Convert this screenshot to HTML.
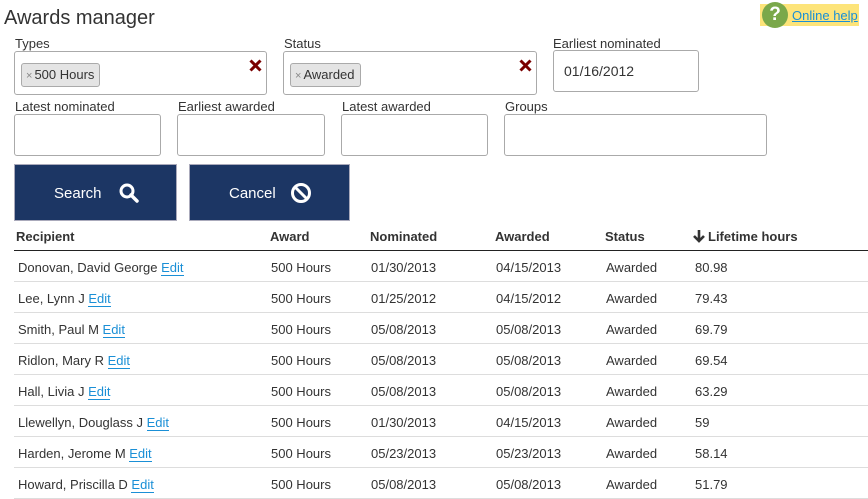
<!DOCTYPE html>
<html><head><style>
*{box-sizing:border-box;margin:0;padding:0}
body{width:868px;height:495px;overflow:hidden;background:#fff;font-family:"Liberation Sans",sans-serif;color:#333;position:relative}
.a{position:absolute;white-space:nowrap}
.lbl{font-size:13px;color:#333}
.box{position:absolute;border:1px solid #aaa;border-radius:3px;background:#fff}
.tag{position:absolute;top:11px;left:6px;height:24px;border:1px solid #aaa;border-radius:3px;background:#e4e4e4;font-size:13px;line-height:22px;padding:0 5px 0 4px;color:#333}
.tag span{color:#888;font-size:11px;margin-right:2px}
.btn{position:absolute;top:164px;height:57px;background:#1c3664;border:1px solid #aab;color:#fff;font-size:15px}
.th{position:absolute;top:229px;font-size:13px;font-weight:bold;color:#333}
.row{position:absolute;left:14px;width:854px;height:31px;border-bottom:1px solid #ddd;font-size:13px}
.row div{position:absolute;top:9px;white-space:nowrap}
.e{color:#1a8fd6;border-bottom:1px solid #1a8fd6}
</style></head><body>
<div class="a" style="left:4px;top:7px;font-size:20px;color:#333">Awards manager</div>
<div class="a" style="left:760px;top:4px;width:99px;height:22px;background:#fde47a"></div>
<div class="a" style="left:762px;top:2px;width:26px;height:26px;border-radius:50%;background:#7aa84a;color:#fff;font-weight:bold;font-size:19px;text-align:center;line-height:26px">?</div>
<div class="a" style="left:792px;top:8px;font-size:13px;color:#1a8fd6;text-decoration:underline">Online help</div>

<div class="a lbl" style="left:15px;top:36px">Types</div>
<div class="box" style="left:14px;top:51px;width:253px;height:44px"><div class="tag"><span>×</span>500 Hours</div>
<svg class="a" style="right:4px;top:7px" width="13" height="13" viewBox="0 0 13 13"><path d="M1.5 1.5L11.5 11.5M11.5 1.5L1.5 11.5" stroke="#7a0000" stroke-width="3"/></svg></div>
<div class="a lbl" style="left:284px;top:36px">Status</div>
<div class="box" style="left:283px;top:51px;width:254px;height:44px"><div class="tag"><span>×</span>Awarded</div>
<svg class="a" style="right:4px;top:7px" width="13" height="13" viewBox="0 0 13 13"><path d="M1.5 1.5L11.5 11.5M11.5 1.5L1.5 11.5" stroke="#7a0000" stroke-width="3"/></svg></div>
<div class="a lbl" style="left:553px;top:36px">Earliest nominated</div>
<div class="box" style="left:553px;top:50px;width:146px;height:42px;font-size:14px;padding:12px 0 0 10px">01/16/2012</div>

<div class="a lbl" style="left:15px;top:99px">Latest nominated</div>
<div class="box" style="left:14px;top:114px;width:147px;height:42px"></div>
<div class="a lbl" style="left:178px;top:99px">Earliest awarded</div>
<div class="box" style="left:177px;top:114px;width:148px;height:42px"></div>
<div class="a lbl" style="left:342px;top:99px">Latest awarded</div>
<div class="box" style="left:341px;top:114px;width:147px;height:42px"></div>
<div class="a lbl" style="left:505px;top:99px">Groups</div>
<div class="box" style="left:504px;top:114px;width:263px;height:42px"></div>

<div class="btn" style="left:14px;width:163px"><span class="a" style="left:39px;top:20px">Search</span>
<svg class="a" style="left:103px;top:17px" width="22" height="22" viewBox="0 0 22 22"><circle cx="9" cy="9" r="6" fill="none" stroke="#fff" stroke-width="3"/><line x1="13" y1="13" x2="19" y2="19" stroke="#fff" stroke-width="3.5" stroke-linecap="round"/></svg></div>
<div class="btn" style="left:189px;width:161px"><span class="a" style="left:39px;top:20px">Cancel</span>
<svg class="a" style="left:100px;top:17px" width="22" height="22" viewBox="0 0 22 22"><circle cx="11" cy="11" r="8.5" fill="none" stroke="#fff" stroke-width="3"/><line x1="5" y1="5" x2="17" y2="17" stroke="#fff" stroke-width="3"/></svg></div>

<div class="th" style="left:16px">Recipient</div>
<div class="th" style="left:270px">Award</div>
<div class="th" style="left:370px">Nominated</div>
<div class="th" style="left:495px">Awarded</div>
<div class="th" style="left:605px">Status</div>
<svg class="a" style="left:692px;top:229px" width="14" height="14" viewBox="0 0 14 14"><path d="M7 1V12M2 7L7 12L12 7" fill="none" stroke="#333" stroke-width="2.6"/></svg>
<div class="th" style="left:708px">Lifetime hours</div>
<div class="a" style="left:14px;top:250px;width:854px;height:1px;background:#222"></div>

<div class="row" style="top:251px"><div style="left:4px">Donovan, David George <span class="e">Edit</span></div><div style="left:257px">500 Hours</div><div style="left:357px">01/30/2013</div><div style="left:482px">04/15/2013</div><div style="left:592px">Awarded</div><div style="left:681px">80.98</div></div>
<div class="row" style="top:282px"><div style="left:4px">Lee, Lynn J <span class="e">Edit</span></div><div style="left:257px">500 Hours</div><div style="left:357px">01/25/2012</div><div style="left:482px">04/15/2012</div><div style="left:592px">Awarded</div><div style="left:681px">79.43</div></div>
<div class="row" style="top:313px"><div style="left:4px">Smith, Paul M <span class="e">Edit</span></div><div style="left:257px">500 Hours</div><div style="left:357px">05/08/2013</div><div style="left:482px">05/08/2013</div><div style="left:592px">Awarded</div><div style="left:681px">69.79</div></div>
<div class="row" style="top:344px"><div style="left:4px">Ridlon, Mary R <span class="e">Edit</span></div><div style="left:257px">500 Hours</div><div style="left:357px">05/08/2013</div><div style="left:482px">05/08/2013</div><div style="left:592px">Awarded</div><div style="left:681px">69.54</div></div>
<div class="row" style="top:375px"><div style="left:4px">Hall, Livia J <span class="e">Edit</span></div><div style="left:257px">500 Hours</div><div style="left:357px">05/08/2013</div><div style="left:482px">05/08/2013</div><div style="left:592px">Awarded</div><div style="left:681px">63.29</div></div>
<div class="row" style="top:406px"><div style="left:4px">Llewellyn, Douglass J <span class="e">Edit</span></div><div style="left:257px">500 Hours</div><div style="left:357px">01/30/2013</div><div style="left:482px">04/15/2013</div><div style="left:592px">Awarded</div><div style="left:681px">59</div></div>
<div class="row" style="top:437px"><div style="left:4px">Harden, Jerome M <span class="e">Edit</span></div><div style="left:257px">500 Hours</div><div style="left:357px">05/23/2013</div><div style="left:482px">05/23/2013</div><div style="left:592px">Awarded</div><div style="left:681px">58.14</div></div>
<div class="row" style="top:468px"><div style="left:4px">Howard, Priscilla D <span class="e">Edit</span></div><div style="left:257px">500 Hours</div><div style="left:357px">05/08/2013</div><div style="left:482px">05/08/2013</div><div style="left:592px">Awarded</div><div style="left:681px">51.79</div></div>
</body></html>
